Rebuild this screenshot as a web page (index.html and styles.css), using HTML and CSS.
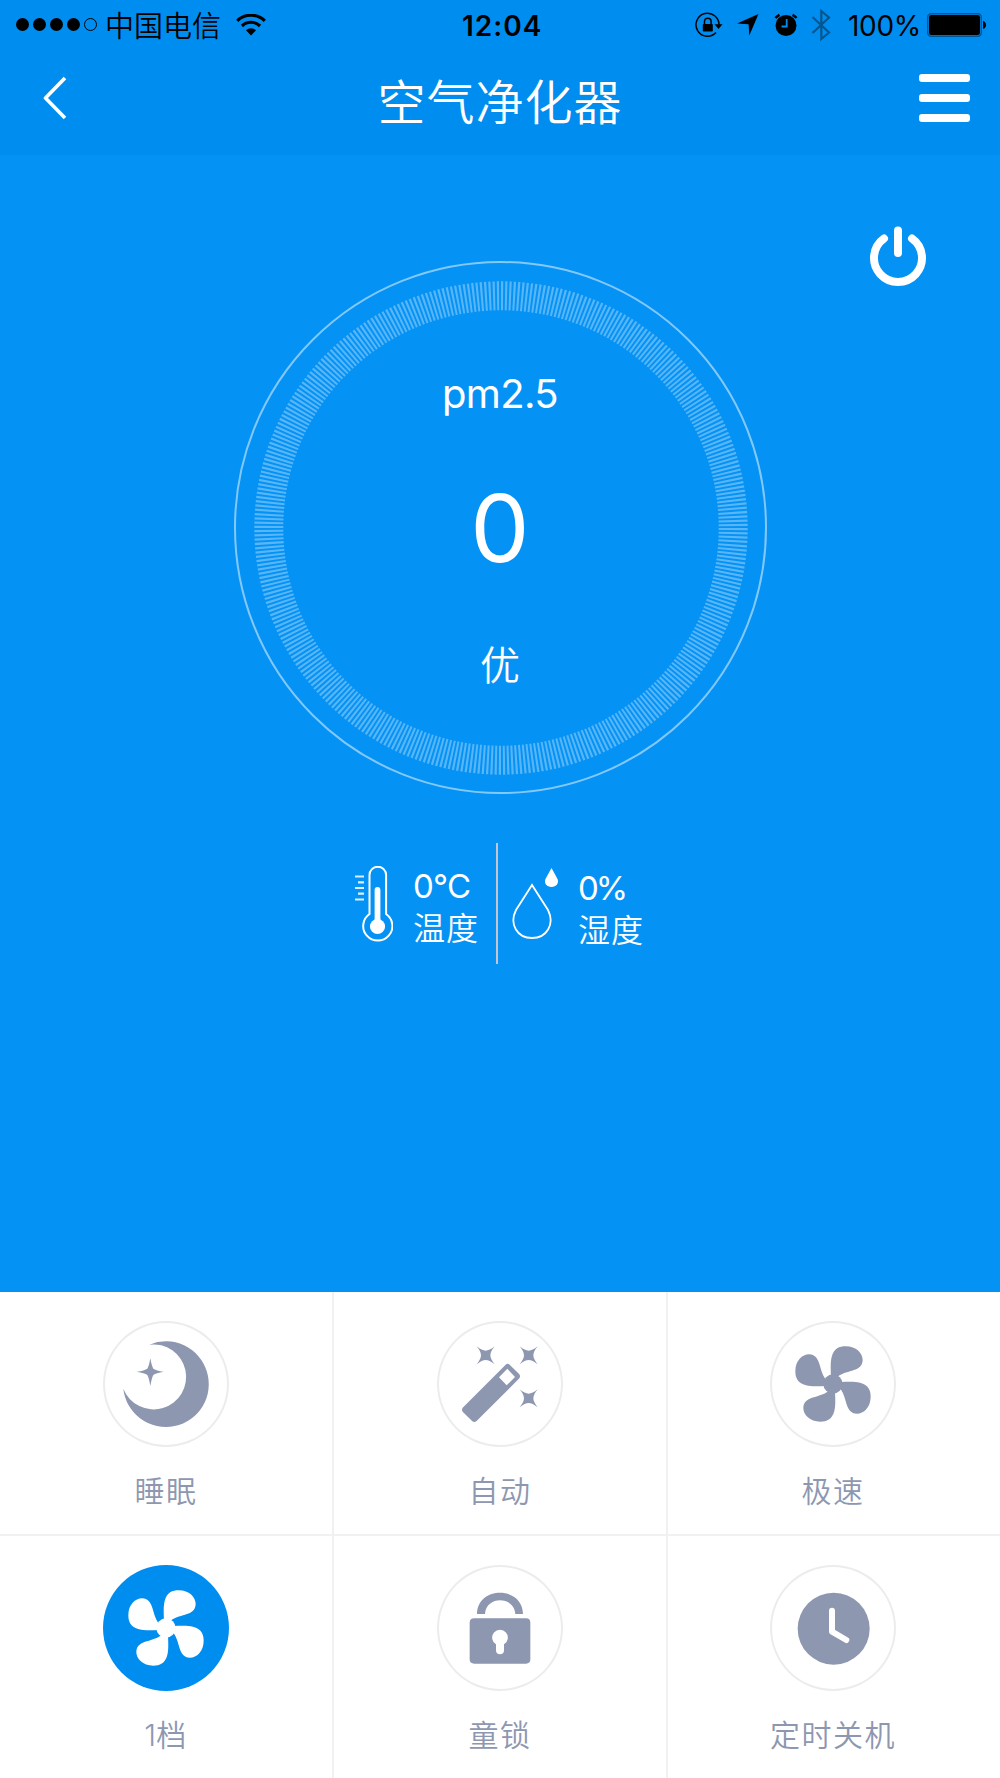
FILE: index.html
```html
<!DOCTYPE HTML>
<html lang="zh-CN">
<head>
<meta charset="utf-8">
<title>空气净化器</title>
<link rel="stylesheet" href="styles.css">
</head>

<body>
	<div class="top">
		<div class="status">
			<div class="status-left">
				<i class="dot"></i><i class="dot"></i><i class="dot"></i><i class="dot"></i><i class="dot empty"></i>
				<span class="carrier">中国电信</span>
				<svg class="wifi" width="30" height="22" viewBox="0 0 30 22">
					<path d="M1.200 6.800C9-.6 21-.6 28.800 6.800" fill="none" stroke="#000" stroke-width="3.200"/>
					<path d="M6 12C11 7 19 7 24 12" fill="none" stroke="#000" stroke-width="3.200"/>
					<path d="M10 16.300C13 13.500 17 13.500 20 16.300L15 21.500Z"/>
				</svg>
			</div>
			<div class="time">12:04</div>
			<div class="status-right">
				<svg width="28" height="26" viewBox="0 0 28 26">
					<path d="M24 13.500A11.500 11.500 0 1 0 21 20.500" fill="none" stroke="#000" stroke-width="1.500"/>
					<path d="M19.500 12.300H27.500L23.500 17Z"/>
					<rect x="7.800" y="12" width="10" height="7.600" rx=".8"/>
					<path d="M9.500 12.500V9.500A3.300 3.300 0 0 1 16.100 9.500V12.500" fill="none" stroke="#000" stroke-width="1.500"/>
				</svg>
				<svg class="arrow" width="22" height="22" viewBox="0 0 22 22"><path d="M21.500 0L12.300 21.500L11.600 10.200L0 9.500Z"/></svg>
				<svg class="alarm" width="24" height="24" viewBox="0 0 24 24">
					<circle cx="12" cy="12.500" r="10.500"/>
					<path d="M1.500 5A13 13 0 0 1 5.500 1.800M18.500 1.800A13 13 0 0 1 22.500 5" fill="none" stroke="#000" stroke-width="2.600"/>
					<path d="M12.700 6V13.500H7.500" fill="none" stroke="#008df0" stroke-width="1.800"/>
				</svg>
				<svg class="bt" width="20" height="34" viewBox="0 0 20 34"><path d="M1.500 9L18 24.500L10.300 31V3L18 9.500L1.500 25" fill="none" stroke="#00568f" stroke-width="2.200"/></svg>
				<span class="percent">100%</span>
				<svg width="60" height="24" viewBox="0 0 60 24">
					<rect x=".7" y=".7" width="53.600" height="22.600" rx="3.500" fill="none" stroke="#005692" stroke-width="1.400"/>
					<rect x="2" y="2" width="51" height="20" rx="2.200"/>
					<path d="M56 8C60 9 60 15 56 16Z"/>
				</svg>
			</div>
		</div>
		<div class="nav">
			<svg class="back" width="24" height="46" viewBox="0 0 24 46"><path d="M22 3L2.500 23L22 43" fill="none" stroke="#fff" stroke-width="3.600" stroke-linejoin="round"/></svg>
			<h1>空气净化器</h1>
			<div class="menu"><i></i><i></i><i></i></div>
		</div>
	</div>

	<div class="main">
		<div class="dial">
			<svg class="ring" width="534" height="534" viewBox="0 0 534 534" fill="none" stroke="#fff">
				<circle cx="266.500" cy="266.500" r="265.500" stroke-width="2" stroke-opacity=".5"/>
				<circle cx="267" cy="267" r="232.200" stroke-width="29" stroke-opacity=".33" pathLength="720" stroke-dasharray="1.050 .95"/>
			</svg>
			<p class="name">pm2.5</p>
			<p class="value">0</p>
			<p class="level">优</p>
		</div>
		<svg class="power" width="58" height="62" viewBox="0 0 58 62"><path d="M15 12.500A24 24 0 1 0 43 12.500M29 4.500V27" fill="none" stroke="#fff" stroke-width="8" stroke-linecap="round"/></svg>
		<div class="info">
			<div class="temp">
				<svg width="38" height="76" viewBox="0 0 38 76">
					<path d="M14.500 48V9A8.300 8.300 0 0 1 31.100 9V48A14.600 14.600 0 1 1 14.500 48Z" fill="none" stroke="#fff" stroke-width="2"/>
					<circle cx="22.500" cy="60.500" r="7.600" fill="#fff"/>
					<path d="M22.500 60V24" stroke="#fff" stroke-width="5.800" stroke-linecap="round"/>
					<path d="M0 10.500H9M3 16.300H9M0 22H9M3 27.700H9M0 33.500H9" stroke="#fff" stroke-opacity=".85" stroke-width="2.200"/>
				</svg>
				<div class="txt">
					<p>0°C</p>
					<p class="cn">温度</p>
				</div>
			</div>
			<div class="humi">
				<svg width="48" height="74" viewBox="0 0 48 74">
					<path d="M20 18L4 43C-3 57 5 71 20 71S43 57 36 43Z" fill="none" stroke="#fff" stroke-width="1.800"/>
					<path d="M39.500 1L34 11C31 16 35 20 39.500 20S48 16 45 11Z" fill="#fff"/>
				</svg>
				<div class="txt">
					<p class="hv">0%</p>
					<p class="cn">湿度</p>
				</div>
			</div>
		</div>
	</div>

	<svg class="defs" width="0" height="0">
		<symbol id="fan" viewBox="91 63 378 378">
			<path id="blade" d="M274 230C273 205 272 187 276 171C283 145 299 139 318 139C350 139 369 160 369 180C367 217 326 207 294 230L280 252Z"/>
			<use href="#blade" transform="rotate(90 280 252)"/>
			<use href="#blade" transform="rotate(180 280 252)"/>
			<use href="#blade" transform="rotate(270 280 252)"/>
			<circle cx="280" cy="252" r="29"/>
		</symbol>
		<symbol id="star" viewBox="0 0 54 54" overflow="visible">
			<path d="M0 0Q16 13 27 13T54 0Q41 16 41 27T54 54Q38 41 27 41T0 54Q13 38 13 27T0 0Z"/>
		</symbol>
	</svg>

	<ul class="btns">
		<li>
			<div class="circle">
				<svg width="126" height="126" viewBox="69 123 378 378">
					<path d="M208 194A128.500 128.500 0 1 1 130 326A97.500 97.500 0 1 0 208 194Z"/>
					<path d="M211 235Q215 258 220 266Q228 271 251 275.500Q228 280 220 285Q215 294 211 318Q207 294 202 285Q194 280 170 275.500Q194 271 202 266Q207 258 211 235Z"/>
				</svg>
			</div>
			<p>睡眠</p>
		</li>
		<li>
			<div class="circle">
				<svg width="126" height="126" viewBox="51 63 378 378">
					<path fill-rule="evenodd" d="M128 323L257 194Q263 189 269 194L298 223Q302 229 298 235L169 364Q163 368 157 364L128 335Q124 329 128 323ZM262 206L237 232L260 256L285 231Z"/>
					<use href="#star" x="170" y="139" width="54" height="54"/>
					<use href="#star" x="299" y="139" width="54" height="54"/>
					<use href="#star" x="299" y="268" width="54" height="54"/>
				</svg>
			</div>
			<p>自动</p>
		</li>
		<li>
			<div class="circle">
				<svg width="126" height="126"><use href="#fan"/></svg>
			</div>
			<p>极速</p>
		</li>
		<li>
			<div class="circle ac">
				<svg width="126" height="126"><use href="#fan"/></svg>
			</div>
			<p><span class="num">1</span>档</p>
		</li>
		<li>
			<div class="circle">
				<svg width="126" height="126" viewBox="1071 75 378 378">
					<path d="M1191 222C1192 137 1328 137 1329 222H1306C1302 167 1218 167 1215 222Z"/>
					<path fill-rule="evenodd" d="M1183 235H1338Q1351 235 1351 248V358Q1351 371 1338 371H1183Q1169 371 1169 358V248Q1169 235 1183 235ZM1248 313V332C1248 346 1272 346 1272 332V313A23.500 23.500 0 1 0 1248 313Z"/>
				</svg>
			</div>
			<p>童锁</p>
		</li>
		<li>
			<div class="circle">
				<svg width="126" height="126" viewBox="91 75 378 378">
					<circle cx="282" cy="266" r="108"/>
					<path d="M277 212V275L320 300" fill="none" stroke="#fff" stroke-width="18" stroke-linecap="round" stroke-linejoin="round"/>
				</svg>
			</div>
			<p>定时关机</p>
		</li>
	</ul>
</body>
</html>
```

FILE: styles.css
```css
* {margin:0; padding:0; box-sizing:border-box;}
li{list-style:none;}
svg{display:block; flex:none;}
body{width:1000px; height:1778px; overflow:hidden; background:#fff; font-family:Inter,"Noto Sans CJK SC",sans-serif;}
.defs{position:absolute;}

/* 顶部 */
.top{height:155px; background:#008df0;}
.status{height:49px; display:grid; grid-template-columns:1fr 80px 1fr; align-items:center; font-size:28px; line-height:46px; color:#000;}
.status-left{display:flex; align-items:center; padding-left:16px;}
.dot{width:13px; height:13px; margin-right:4px; border-radius:50%; background:#000;}
.dot.empty{background:none; border:1px solid #000;}
.carrier{margin-left:4px; font-family:"Noto Sans CJK SC",sans-serif; font-size:29px; font-weight:350; line-height:49px;}
.wifi{margin-left:15px;}
.time{font-weight:600; font-size:28px; text-align:center; letter-spacing:1px; margin-left:2px; padding-top:3px; white-space:nowrap;}
.status-right{display:flex; align-items:center; justify-content:flex-end; padding-right:13px;}
.arrow{margin-left:14px;}
.alarm{margin-left:15px;}
.bt{margin-left:13px;}
.percent{margin:0 6px 0 17px; padding-top:3px; letter-spacing:-.3px;}
.nav{height:106px; display:flex; justify-content:space-between; align-items:flex-start; padding:0 30px 0 43px;}
.back{margin-top:26px;}
.nav h1{font-family:"Noto Sans CJK SC",sans-serif; font-size:48px; font-weight:350; letter-spacing:1px; line-height:101px; color:#fff; margin-left:14px;}
.menu{width:51px; display:flex; flex-direction:column; gap:12px; margin-top:25px;}
.menu i{height:8px; border-radius:3px; background:#fff;}

/* 仪表 */
.main{height:1137px; background:#0592f5; position:relative; padding-top:106px; color:#fff;}
.dial{width:534px; height:534px; margin:0 auto; position:relative; text-align:center; padding-top:105px;}
.ring{position:absolute; left:1px; top:0;}
.dial .name{font-size:40px; line-height:56px; letter-spacing:-.6px;}
.dial .value{font-size:94px; line-height:110px; margin-top:51px;}
.dial .level{font-family:"Noto Sans CJK SC",sans-serif; font-size:40px; font-weight:350; line-height:60px; margin-top:50px;}
.power{position:absolute; right:73px; top:71px;}
.info{height:121px; margin-top:48px; display:flex;}
.temp{width:498px; padding:23px 18px 0 0; display:flex; justify-content:flex-end; gap:20px; border-right:2px solid #c3c5d0;}
.humi{padding:24px 0 0 14px; display:flex; gap:18px;}
.txt{font-size:33px; line-height:40px; width:65px; white-space:nowrap; letter-spacing:-.7px;}
.txt .hv{letter-spacing:-3px; padding-top:1px;}
.txt .cn{font-family:"Noto Sans CJK SC",sans-serif; font-size:32px; font-weight:350; letter-spacing:1px; line-height:41px;}

/* 按钮 */
.btns{display:grid; grid-template-columns:334px 334px 332px; grid-template-rows:244px 242px;}
.btns li{padding-top:29px; border-right:2px solid #f1f1f1; border-bottom:2px solid #f1f1f1; text-align:center;}
.btns li:nth-child(3n){border-right:0; padding-right:2px;}
.btns li:nth-child(n+4){border-bottom:0;}
.circle{width:126px; height:126px; margin:0 auto; border-radius:50%; box-shadow:inset 0 0 0 2px #ececec; fill:#8e97b0;}
.circle.ac{background:#008df0; box-shadow:none; fill:#fff;}
.btns p{font-family:"Noto Sans CJK SC",sans-serif; font-size:30px; font-weight:350; letter-spacing:1.5px; line-height:44px; margin-top:20px; color:#8e97b0;}
.num{font-family:Inter,sans-serif; line-height:1; letter-spacing:0;}
```
